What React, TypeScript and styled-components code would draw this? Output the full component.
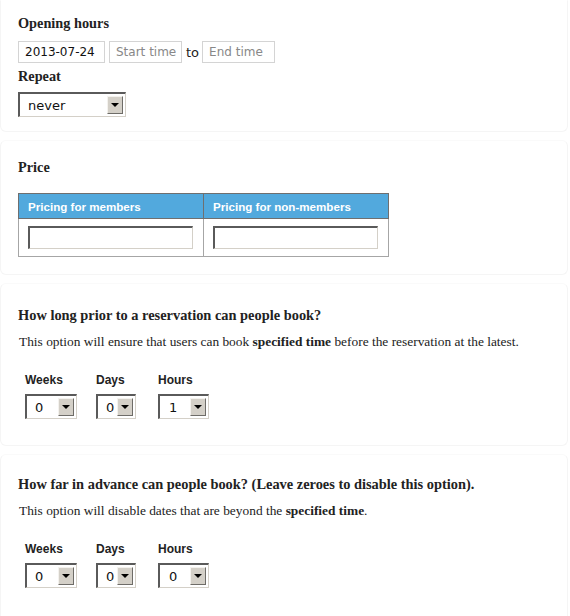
import React from 'react';
import styled, { createGlobalStyle } from 'styled-components';

const GlobalStyle = createGlobalStyle`
  html, body {
    margin: 0;
    padding: 0;
    background: #fff;
    overflow: hidden;
  }
  body {
    font-family: 'Liberation Serif', 'Times New Roman', serif;
    color: #222;
  }
`;

const Page = styled.div`
  width: 568px;
  display: flex;
  flex-direction: column;
  gap: 8px;
`;

const Card = styled.section<{ $top: number; $bottom: number; $first?: boolean }>`
  border: 1px solid #f5f5f5;
  border-top-color: ${(p) => (p.$first ? 'transparent' : '#fafafa')};
  border-radius: ${(p) => (p.$first ? '0 0 6px 6px' : '6px')};
  padding: ${(p) => `${p.$top}px 17px ${p.$bottom}px`};
`;

const Heading = styled.h3<{ $size?: number; $gap?: number }>`
  margin: 0 0 ${(p) => p.$gap ?? 10}px;
  font-size: ${(p) => p.$size ?? 14.3}px;
  line-height: 16px;
  font-weight: bold;
  color: #222;
  white-space: nowrap;
`;

const Text = styled.p`
  margin: 0 0 22px 1px;
  font-size: 13.4px;
  line-height: 16px;
  color: #222;
  white-space: nowrap;
`;

const DateRow = styled.div`
  display: flex;
  align-items: center;
  gap: 4px;
  margin-bottom: 5px;
`;

const TextBox = styled.div<{ $placeholder?: boolean; $width: number }>`
  width: ${(p) => p.$width}px;
  height: 22px;
  box-sizing: border-box;
  border: 1px solid #d4d4d4;
  padding: 0 6px;
  display: flex;
  align-items: center;
  font-family: 'DejaVu Sans', Verdana, sans-serif;
  font-size: 12px;
  color: ${(p) => (p.$placeholder ? '#888' : '#111')};
  background: #fff;
  white-space: nowrap;
`;

const To = styled.span`
  font-family: 'DejaVu Sans', Verdana, sans-serif;
  font-size: 13px;
  color: #222;
  margin-right: -1px;
`;

const SelectBox = styled.div<{ $width: number; $pad?: number }>`
  width: ${(p) => p.$width}px;
  height: 25px;
  box-sizing: border-box;
  border-style: solid;
  border-width: 2px 1px 1px 2px;
  border-color: #5a5a5a #d4d0c8 #d4d0c8 #5a5a5a;
  background: #fff;
  display: flex;
  align-items: center;
  justify-content: space-between;
  padding: 0 2px 0 ${(p) => p.$pad ?? 8}px;
  font-family: 'DejaVu Sans', Verdana, sans-serif;
  font-size: 13px;
  color: #111;
`;

const DropButton = styled.span`
  width: 16px;
  height: 18px;
  box-sizing: border-box;
  background: #d4d0c8;
  border-style: solid;
  border-width: 1px;
  border-color: #f4f2ee #6e6c68 #6e6c68 #f4f2ee;
  display: flex;
  align-items: center;
  justify-content: center;

  &::after {
    content: '';
    border-left: 4px solid transparent;
    border-right: 4px solid transparent;
    border-top: 4px solid #000;
  }
`;

const PriceTable = styled.table`
  width: 371px;
  border-collapse: collapse;
  font-family: 'Liberation Sans', Arial, sans-serif;
`;

const HeadCell = styled.th`
  background: #52a9dd;
  color: #fff;
  font-size: 11.6px;
  font-weight: bold;
  text-align: left;
  height: 24px;
  padding: 0 0 0 9px;
  border: 1px solid #6f6f6f;
`;

const BodyCell = styled.td`
  border: 1px solid #a6a6a6;
  border-top: none;
  padding: 7px 9px 7px 9px;
`;

const PriceInput = styled.div`
  width: 165px;
  height: 23px;
  box-sizing: border-box;
  border-style: solid;
  border-width: 2px 1px 1px 2px;
  border-color: #5a5a5a #d4d0c8 #d4d0c8 #5a5a5a;
  background: #fff;
`;

const FieldGrid = styled.div`
  display: grid;
  grid-template-columns: 71px 62px auto;
  row-gap: 6px;
  margin-left: 7px;
`;

const FieldLabel = styled.span`
  font-family: 'Liberation Sans', Arial, sans-serif;
  font-size: 12px;
  font-weight: bold;
  line-height: 16px;
  color: #222;
`;

const Select = ({ value, width, pad }: { value: string; width: number; pad?: number }) => (
  <SelectBox $width={width} $pad={pad}>
    <span>{value}</span>
    <DropButton />
  </SelectBox>
);

const DurationPicker = ({ hours }: { hours: string }) => (
  <FieldGrid>
    <FieldLabel>Weeks</FieldLabel>
    <FieldLabel>Days</FieldLabel>
    <FieldLabel>Hours</FieldLabel>
    <Select value="0" width={52} />
    <Select value="0" width={40} pad={8} />
    <Select value={hours} width={51} pad={9} />
  </FieldGrid>
);

export default function App() {
  return (
    <>
      <GlobalStyle />
      <Page>
        <Card $first $top={14} $bottom={14}>
          <Heading $gap={10}>Opening hours</Heading>
          <DateRow>
            <TextBox $width={87}>2013-07-24</TextBox>
            <TextBox $width={73} $placeholder>Start time</TextBox>
            <To>to</To>
            <TextBox $width={73} $placeholder>End time</TextBox>
          </DateRow>
          <Heading $gap={8}>Repeat</Heading>
          <Select value="never" width={108} />
        </Card>

        <Card $top={18} $bottom={17}>
          <Heading $gap={18}>Price</Heading>
          <PriceTable>
            <thead>
              <tr>
                <HeadCell>Pricing for members</HeadCell>
                <HeadCell>Pricing for non-members</HeadCell>
              </tr>
            </thead>
            <tbody>
              <tr>
                <BodyCell><PriceInput /></BodyCell>
                <BodyCell><PriceInput /></BodyCell>
              </tr>
            </tbody>
          </PriceTable>
        </Card>

        <Card $top={23} $bottom={26}>
          <Heading $size={14.4} $gap={11}>How long prior to a reservation can people book?</Heading>
          <Text>
            This option will ensure that users can book <b>specified time</b> before the reservation at the latest.
          </Text>
          <DurationPicker hours="1" />
        </Card>

        <Card $top={21} $bottom={34}>
          <Heading $size={14.4} $gap={11}>How far in advance can people book? (Leave zeroes to disable this option).</Heading>
          <Text>
            This option will disable dates that are beyond the <b>specified time</b>.
          </Text>
          <DurationPicker hours="0" />
        </Card>
      </Page>
    </>
  );
}
